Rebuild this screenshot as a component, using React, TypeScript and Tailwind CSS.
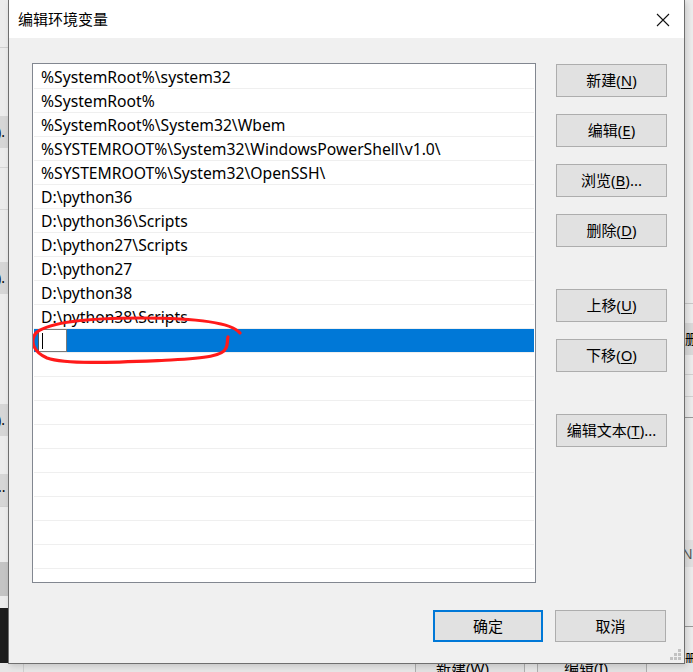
import React from "react";

const rows = [
  "%SystemRoot%\\system32",
  "%SystemRoot%",
  "%SystemRoot%\\System32\\Wbem",
  "%SYSTEMROOT%\\System32\\WindowsPowerShell\\v1.0\\",
  "%SYSTEMROOT%\\System32\\OpenSSH\\",
  "D:\\python36",
  "D:\\python36\\Scripts",
  "D:\\python27\\Scripts",
  "D:\\python27",
  "D:\\python38",
  "D:\\python38\\Scripts",
];

const font = { fontFamily: '"Noto Sans", "Noto Sans CJK SC", sans-serif' };

function Btn({ label, mn, after = "", className = "" }: { label: string; mn: string; after?: string; className?: string }) {
  return (
    <div
      className={`w-[111px] h-[33px] flex items-center justify-center bg-[#e1e1e1] border border-[#adadad] text-[15px] text-black leading-none ${className}`}
    >
      <span>
        {label}(<span className="underline underline-offset-2">{mn}</span>){after}
      </span>
    </div>
  );
}

export default function App() {
  const empty = Array.from({ length: 10 });
  return (
    <div className="relative w-[693px] h-[672px] overflow-hidden bg-[#e9e9e9]" style={font}>
      {/* background windows: left strip */}
      <div className="absolute left-0 top-0 w-[8px] h-[672px] bg-[#ececec] flex flex-col overflow-hidden">
        <div className="h-[48px] border-b border-[#d0d0d0]" />
        <div className="h-[68px]" />
        <div className="h-[32px] bg-[#d6d6d6] text-[14px] leading-[32px] -ml-[3px] text-black">).</div>
        <div className="h-[20px] border-b border-[#d6d6d6]" />
        <div className="h-[42px] border-b border-[#d6d6d6]" />
        <div className="h-[52px]" />
        <div className="h-[32px] bg-[#d6d6d6] text-[14px] leading-[32px] -ml-[3px] text-black">).</div>
        <div className="h-[110px]" />
        <div className="h-[32px] bg-[#d6d6d6] text-[14px] leading-[32px] -ml-[3px] text-black">).</div>
        <div className="h-[38px]" />
        <div className="h-[32px] bg-[#d6d6d6] text-[14px] leading-[26px] -ml-[2px] text-black">..</div>
        <div className="h-[56px] border-t border-[#d0d0d0]" />
        <div className="h-[34px] bg-[#c4c4c4]" />
        <div className="h-[12px]" />
        <div className="flex-1 bg-[#1c1c1c]" />
      </div>
      {/* right strip */}
      <div className="absolute left-[685px] top-0 w-[8px] h-[672px] bg-[#ececec] flex flex-col overflow-hidden">
        <div className="h-[304px] border-b border-[#c8c8c8]" />
        <div className="h-[19px]" />
        <div className="h-[32px] bg-[#d9d9d9] text-[14px] leading-[32px] text-black">删</div>
        <div className="h-[20px] border-b border-[#d0d0d0]" />
        <div className="h-[22px] border-b border-[#d0d0d0]" />
        <div className="h-[21px] border-b border-[#9a9a9a]" />
        <div className="h-[122px]" />
        <div className="h-[27px] bg-[#e0e0e0] text-[14px] leading-[27px] -ml-[3px] text-[#555]">N</div>
        <div className="h-[60px] border-b border-[#9a9a9a]" />
        <div className="h-[20px]" />
        <div className="flex-1 text-[14px] leading-[24px] text-black">删</div>
      </div>
      {/* bottom strip */}
      <div className="absolute left-0 top-[663px] w-[693px] h-[9px] bg-[#e6e6e6] flex overflow-hidden">
        <div className="w-[24px] border-r border-[#cfcfcf]" />
        <div className="w-[391px]" />
        <div className="w-[110px] bg-[#e1e1e1] border-x border-[#adadad] overflow-hidden">
          <div className="text-[15px] leading-none -mt-[2px] pl-[20px] text-black whitespace-nowrap">新建(W)...</div>
        </div>
        <div className="w-[12px]" />
        <div className="w-[110px] bg-[#e1e1e1] border-x border-[#adadad] overflow-hidden">
          <div className="text-[15px] leading-none -mt-[2px] pl-[26px] text-black whitespace-nowrap">编辑(I)...</div>
        </div>
      </div>

      {/* dialog */}
      <div className="absolute left-[8px] top-0 w-[677px] h-[664px] border-x border-b border-[#6f6f6f] bg-[#f0f0f0] flex flex-col shadow-[2px_2px_6px_rgba(0,0,0,0.15)]">
        <div className="h-[38px] bg-white flex items-center justify-between shrink-0">
          <div className="pl-[9px] text-[15px] text-black" style={{ fontFamily: '"Noto Sans CJK SC", sans-serif' }}>
            编辑环境变量
          </div>
          <svg width="14" height="14" viewBox="0 0 14 14" className="mr-[14px] mt-[1px]">
            <path d="M1 1 L13 13 M13 1 L1 13" stroke="#111" strokeWidth="1.1" />
          </svg>
        </div>
        <div className="flex pl-[23px] pt-[25px] gap-[20px]">
          {/* list */}
          <div className="relative w-[504px] h-[520px] border border-[#828790] bg-white pt-[1px] px-px overflow-hidden">
            {rows.map((r) => (
              <div key={r} className="h-[24px] border-b border-[#efefef] flex items-center pl-[7px] pt-[2px] text-[15.7px] text-black whitespace-nowrap">
                {r}
              </div>
            ))}
            <div className="h-[24px] border-b border-[#efefef] bg-[#0078d7] flex items-center pl-[4px]">
              <div className="w-[29px] h-[23px] bg-white border border-[#7a7a7a] border-l-[#555] flex items-center pl-[3px]">
                <div className="w-px h-[16px] bg-black" />
              </div>
            </div>
            {empty.map((_, i) => (
              <div key={i} className="h-[24px] border-b border-[#efefef]" />
            ))}
            {/* red hand drawn loop */}
            <svg className="absolute left-[-2px] top-[250px]" width="220" height="54" viewBox="0 0 220 54">
              <path
                d="M209 19 C 200 8, 160 4, 110 4 C 60 4, 20 8, 6 18 C -2 26, 2 38, 16 44 C 36 51, 90 48, 140 46 C 175 44, 192 42, 195 34 C 197 30, 196 26, 197 23"
                fill="none"
                stroke="#ff1a1a"
                strokeWidth="3.2"
                strokeLinecap="round"
              />
            </svg>
          </div>
          {/* right buttons */}
          <div className="flex flex-col pt-[1px]">
            <Btn label="新建" mn="N" />
            <Btn label="编辑" mn="E" className="mt-[17px]" />
            <Btn label="浏览" mn="B" after="..." className="mt-[17px]" />
            <Btn label="删除" mn="D" className="mt-[17px]" />
            <Btn label="上移" mn="U" className="mt-[42px]" />
            <Btn label="下移" mn="O" className="mt-[17px]" />
            <Btn label="编辑文本" mn="T" after="..." className="mt-[42px]" />
          </div>
        </div>
        <div className="flex justify-end gap-[12px] pr-[18px] mt-[27px]">
          <div className="w-[110px] h-[32px] flex items-center justify-center bg-[#e1e1e1] border-2 border-[#0078d7] text-[15px] text-black">
            确定
          </div>
          <div className="w-[111px] h-[32px] flex items-center justify-center bg-[#e1e1e1] border border-[#adadad] text-[15px] text-black">
            取消
          </div>
        </div>
        {/* resize grip */}
        <svg className="absolute right-[2px] bottom-[2px]" width="12" height="12" viewBox="0 0 12 12">
          <rect x="8" y="0" width="3" height="3" fill="#c2c2c2" />
          <rect x="4" y="4" width="3" height="3" fill="#c2c2c2" />
          <rect x="8" y="4" width="3" height="3" fill="#c2c2c2" />
          <rect x="0" y="8" width="3" height="3" fill="#c2c2c2" />
          <rect x="4" y="8" width="3" height="3" fill="#c2c2c2" />
          <rect x="8" y="8" width="3" height="3" fill="#c2c2c2" />
        </svg>
      </div>
    </div>
  );
}
